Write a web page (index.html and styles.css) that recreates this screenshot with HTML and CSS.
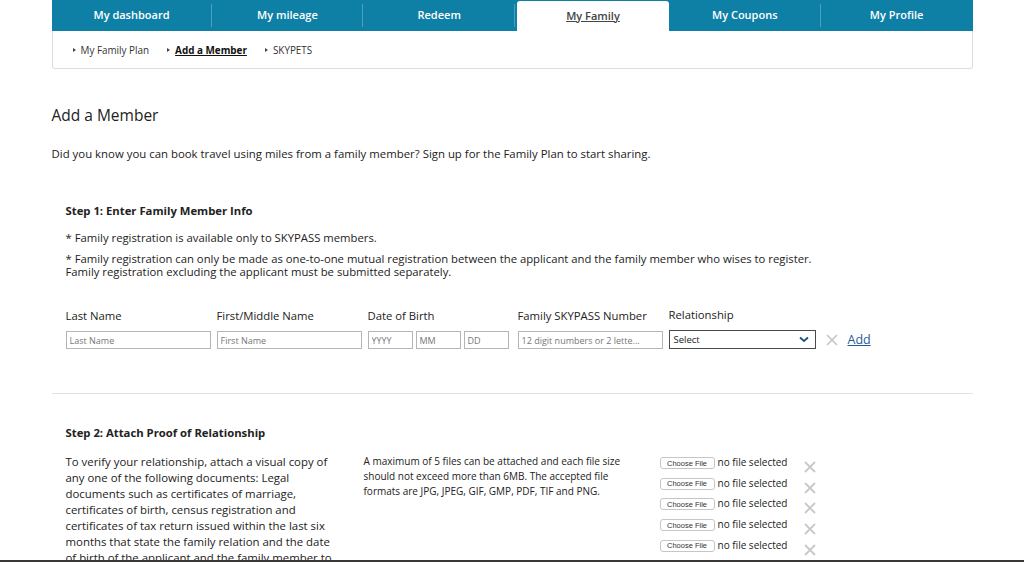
FILE: index.html
```html
<!DOCTYPE html>
<html>
<head>
    <link rel="stylesheet" href="styles.css">
</head>
<body>
    <div class="page">
        <div class="nav">
            <div class="tabs">
                <a class="tab first">My dashboard</a>
                <a class="tab">My mileage</a>
                <a class="tab">Redeem</a>
                <a class="tab active">My Family</a>
                <a class="tab">My Coupons</a>
                <a class="tab last">My Profile</a>
            </div>
            <div class="subnav">
                <a class="sub">My Family Plan</a>
                <a class="sub current">Add a Member</a>
                <a class="sub">SKYPETS</a>
            </div>
        </div>

        <h1 class="title">Add a Member</h1>
        <p class="intro">Did you know you can book travel using miles from a family member? Sign up for the Family Plan to start sharing.</p>

        <div class="step step-one">
            <h2>Step 1: Enter Family Member Info</h2>
            <p class="note">* Family registration is available only to SKYPASS members.</p>
            <p class="note">* Family registration can only be made as one-to-one mutual registration between the applicant and the family member who wises to register.<br>Family registration excluding the applicant must be submitted separately.</p>

            <div class="fields">
                <div class="field">
                    <label>Last Name</label>
                    <input class="text wide" placeholder="Last Name">
                </div>
                <div class="field">
                    <label>First/Middle Name</label>
                    <input class="text wide" placeholder="First Name">
                </div>
                <div class="field">
                    <label>Date of Birth</label>
                    <div class="dob">
                        <input class="text small" placeholder="YYYY">
                        <input class="text small" placeholder="MM">
                        <input class="text small" placeholder="DD">
                    </div>
                </div>
                <div class="field">
                    <label>Family SKYPASS Number</label>
                    <input class="text wide" placeholder="12 digit numbers or 2 lette...">
                </div>
                <div class="field">
                    <label>Relationship</label>
                    <div class="select">
                        <span>Select</span>
                        <svg width="10" height="7" viewBox="0 0 10 7"><path d="M1 1.5 L5 5 L9 1.5" fill="none" stroke="#1c4f86" stroke-width="1.8"/></svg>
                    </div>
                </div>
                <div class="actions">
                    <svg class="remove" width="12" height="12" viewBox="0 0 12 12"><path d="M1 1 L11 11 M11 1 L1 11" stroke="#c4c4c4" stroke-width="1.6"/></svg>
                    <a class="add">Add</a>
                </div>
            </div>
        </div>

        <hr class="divider">

        <div class="step step-two">
            <h2>Step 2: Attach Proof of Relationship</h2>
            <div class="attach">
                <p class="verify">To verify your relationship, attach a visual copy of any one of the following documents: Legal documents such as certificates of marriage, certificates of birth, census registration and certificates of tax return issued within the last six months that state the family relation and the date of birth of the applicant and the family member to be registered.</p>
                <p class="limits">A maximum of 5 files can be attached and each file size should not exceed more than 6MB. The accepted file formats are JPG, JPEG, GIF, GMP, PDF, TIF and PNG.</p>
                <div class="files">
                    <div class="file"><button>Choose File</button><span>no file selected</span><svg class="x" width="12" height="12" viewBox="0 0 12 12"><path d="M1 1 L11 11 M11 1 L1 11" stroke="#c8c8c8" stroke-width="1.8"/></svg></div>
                    <div class="file"><button>Choose File</button><span>no file selected</span><svg class="x" width="12" height="12" viewBox="0 0 12 12"><path d="M1 1 L11 11 M11 1 L1 11" stroke="#c8c8c8" stroke-width="1.8"/></svg></div>
                    <div class="file"><button>Choose File</button><span>no file selected</span><svg class="x" width="12" height="12" viewBox="0 0 12 12"><path d="M1 1 L11 11 M11 1 L1 11" stroke="#c8c8c8" stroke-width="1.8"/></svg></div>
                    <div class="file"><button>Choose File</button><span>no file selected</span><svg class="x" width="12" height="12" viewBox="0 0 12 12"><path d="M1 1 L11 11 M11 1 L1 11" stroke="#c8c8c8" stroke-width="1.8"/></svg></div>
                    <div class="file"><button>Choose File</button><span>no file selected</span><svg class="x" width="12" height="12" viewBox="0 0 12 12"><path d="M1 1 L11 11 M11 1 L1 11" stroke="#c8c8c8" stroke-width="1.8"/></svg></div>
                </div>
            </div>
        </div>
    </div>
    <div class="frame-edge"></div>
</body>
</html>
```

FILE: styles.css
```css
body {
    margin: 0;
    background-color: #ffffff;
    font-family: "Open Sans", "Noto Sans", sans-serif;
    color: #222222;
}

.page {
    width: 921px;
    margin: 0 auto;
}

.tabs {
    display: flex;
    height: 31px;
    background-color: #0f80a5;
}

.tab {
    flex: 1;
    display: flex;
    align-items: center;
    justify-content: center;
    padding-bottom: 2px;
    color: #ffffff;
    font-size: 11px;
    font-weight: 600;
    position: relative;
}

.tab.first {
    flex: 0 0 160px;
}

.tab::after {
    content: "";
    position: absolute;
    right: 0;
    top: 4px;
    bottom: 4px;
    width: 1px;
    background-color: #4d9fbd;
}

.tab.last::after,
.tab.active::after {
    display: none;
}

.tab.active {
    background-color: #ffffff;
    color: #444444;
    text-decoration: underline;
    border-radius: 3px 3px 0 0;
    margin-top: 1px;
    margin-left: 2px;
}

.subnav {
    height: 37px;
    display: flex;
    align-items: center;
    padding-left: 20px;
    gap: 18px;
    border: 1px solid #dddddd;
    border-top: none;
    border-radius: 0 0 3px 3px;
    font-size: 9.9px;
}

.sub {
    color: #333333;
    display: flex;
    align-items: center;
}

.sub::before {
    content: "";
    border-left: 3px solid #444444;
    border-top: 2px solid transparent;
    border-bottom: 2px solid transparent;
    margin-right: 5px;
}

.sub.current {
    font-weight: 700;
    text-decoration: underline;
    color: #111111;
}

.title {
    font-size: 15.5px;
    font-weight: 400;
    margin: 35px 0 0;
    color: #222222;
}

.intro {
    font-size: 11.4px;
    margin: 20px 0 0;
    color: #222222;
}

.step {
    padding-left: 14px;
}

.step h2 {
    font-size: 11.3px;
    font-weight: 700;
    margin: 0;
}

.step-one {
    padding-top: 42px;
}

.note {
    font-size: 11.3px;
    line-height: 13px;
    margin: 13px 0 0;
}

.note + .note {
    margin-top: 8px;
}

.fields {
    display: flex;
    align-items: flex-end;
    gap: 6px;
    margin-top: 29px;
}

.field {
    display: flex;
    flex-direction: column;
}

.field label {
    font-size: 11.3px;
    margin-bottom: 8px;
}

.text {
    box-sizing: border-box;
    height: 18px;
    border: 1px solid #b5b5b5;
    padding: 0 3px;
    font-family: inherit;
    font-size: 9px;
    color: #333333;
    margin: 0;
}

.text::placeholder {
    color: #777777;
}

.wide {
    width: 145px;
}

.dob {
    display: flex;
    gap: 3px;
    margin-right: 3px;
}

.small {
    width: 45px;
}

.select {
    box-sizing: border-box;
    width: 147px;
    height: 19px;
    border: 1px solid #4a4a4a;
    display: flex;
    align-items: center;
    justify-content: space-between;
    padding: 0 6px 0 4px;
    font-size: 9.5px;
    color: #222222;
}

.actions {
    display: flex;
    align-items: center;
    height: 19px;
    gap: 10px;
    margin-left: 4px;
}

.add {
    color: #1e5a9c;
    text-decoration: underline;
    font-size: 12.5px;
}

.divider {
    border: none;
    border-top: 1px solid #e2e2e2;
    margin: 44px 0 0;
}

.step-two {
    padding-top: 31px;
}

.attach {
    display: flex;
    margin-top: 14px;
}

.verify {
    width: 272px;
    margin: 0;
    font-size: 11.4px;
    line-height: 16px;
}

.limits {
    width: 266px;
    margin: 0 0 0 26px;
    font-size: 10px;
    line-height: 15px;
}

.files {
    margin-left: 30px;
    display: flex;
    flex-direction: column;
    gap: 5.7px;
    margin-top: 1px;
}

.file {
    display: flex;
    align-items: flex-start;
    height: 15px;
}

.file button {
    font-family: "Liberation Sans", sans-serif;
    font-size: 7.5px;
    height: 12px;
    width: 55px;
    padding: 0;
    margin-top: 2px;
    background-color: #ffffff;
    border: 1px solid #c6c6c6;
    border-radius: 3px;
    color: #333333;
}

.file span {
    font-size: 10px;
    margin-left: 3px;
    color: #222222;
}

.file .x {
    margin-left: 17px;
    margin-top: 6px;
}

.frame-edge {
    position: fixed;
    left: 0;
    right: 0;
    bottom: 0;
    height: 2px;
    background-color: #3a3836;
}
```
